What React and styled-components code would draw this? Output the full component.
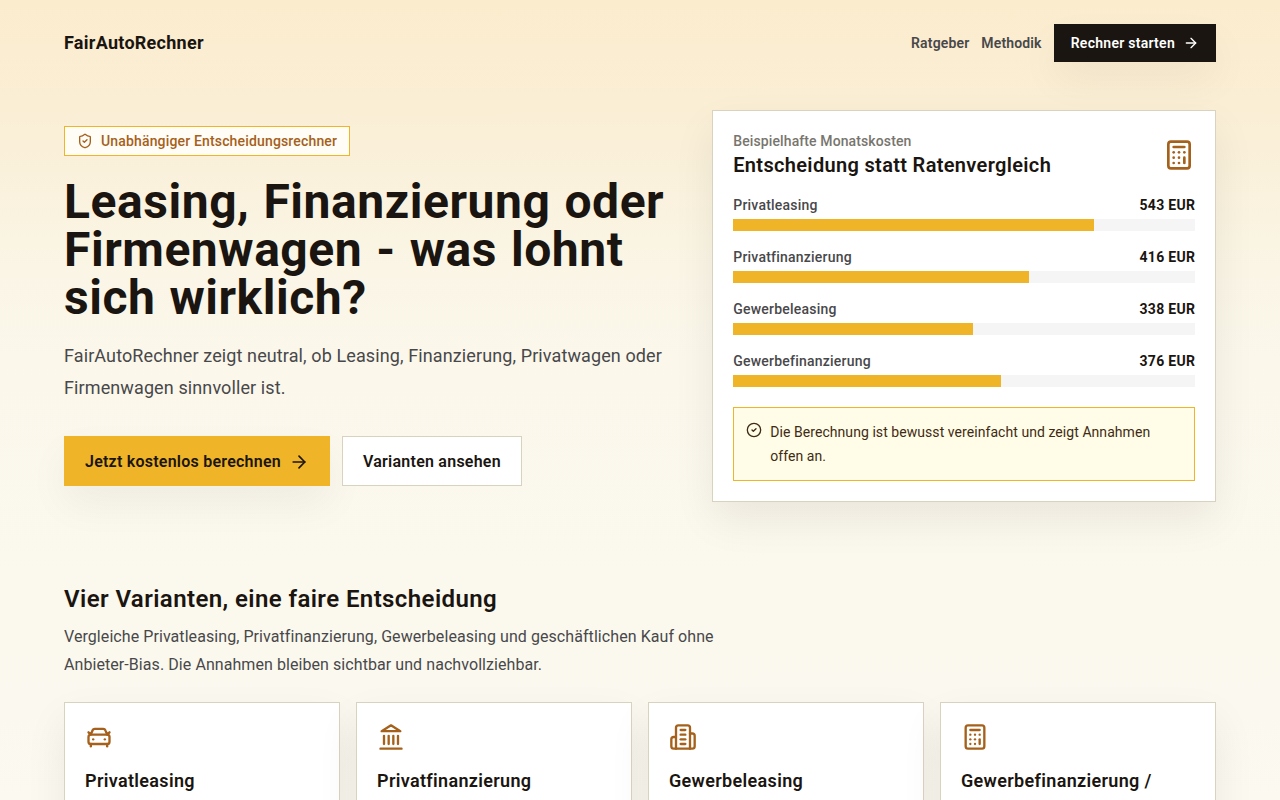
import React from "react";
import styled, { createGlobalStyle } from "styled-components";
import { ArrowRight, Calculator, CarFront, CircleCheck, ShieldCheck } from "lucide-react";

const ink = "#1a1510";
const amber = "#f0b429";
const brown = "#a5601b";
const line = "#d9d2bf";
const font = `Roboto, "Noto Sans", Arial, sans-serif`;

const GlobalStyle = createGlobalStyle`
  * { box-sizing: border-box; }
  html, body {
    margin: 0;
    height: 800px;
    overflow: hidden;
  }
  body {
    font-family: ${font};
    color: ${ink};
    background: #fbf9f0;
  }
`;

const Page = styled.div`
  min-height: 800px;
  padding: 0 64px;
  background: linear-gradient(
    180deg,
    #fcecce 0,
    #faeed4 100px,
    #faf5e5 265px,
    #fbf7eb 360px,
    #fbf9f0 800px
  );
`;

const Header = styled.header`
  height: 86px;
  display: flex;
  align-items: center;
  justify-content: space-between;
`;

const Logo = styled.div`
  padding-bottom: 2px;
  font-size: 18px;
  font-weight: 700;
  letter-spacing: 0.27px;
`;

const Nav = styled.nav`
  display: flex;
  align-items: center;
  gap: 12px;
`;

const NavLink = styled.a`
  font-size: 14px;
  font-weight: 600;
  letter-spacing: 0.15px;
  color: #48484a;
`;

const Button = styled.a`
  display: inline-flex;
  align-items: center;
  justify-content: center;
  gap: 8px;
  font-weight: 600;
  border: 1px solid transparent;
`;

const NavButton = styled(Button)`
  height: 38px;
  padding: 0 16px;
  font-size: 14px;
  letter-spacing: 0.27px;
  background: ${ink};
  color: #fff;
  box-shadow: 0 18px 40px rgba(26, 21, 16, 0.05);
`;

const Hero = styled.section`
  display: grid;
  grid-template-columns: 1fr 504px;
  gap: 48px;
  align-items: center;
  margin-top: 24px;
`;

const Intro = styled.div`
  display: flex;
  flex-direction: column;
  align-items: flex-start;
`;

const Badge = styled.div`
  height: 30px;
  display: inline-flex;
  align-items: center;
  gap: 8px;
  padding: 0 12px;
  font-size: 14px;
  font-weight: 500;
  letter-spacing: 0.16px;
  color: ${brown};
  background: #fffdf5;
  border: 1px solid ${amber};
`;

const Headline = styled.h1`
  margin: 22px 0 0;
  font-size: 48px;
  line-height: 48px;
  font-weight: 700;
  letter-spacing: 0.55px;
  word-spacing: 1.5px;
  white-space: nowrap;
`;

const Lead = styled.p`
  margin: 18px 0 0;
  font-size: 18px;
  line-height: 32px;
  letter-spacing: 0.11px;
  color: #48484a;
`;

const Actions = styled.div`
  display: flex;
  gap: 12px;
  margin-top: 32px;
`;

const PrimaryButton = styled(Button)`
  height: 50px;
  padding: 1px 20px 0;
  font-size: 16px;
  letter-spacing: 0.24px;
  background: ${amber};
  box-shadow: 0 18px 40px rgba(26, 21, 16, 0.05);
`;

const SecondaryButton = styled(Button)`
  height: 50px;
  padding: 1px 20px 0;
  font-size: 16px;
  letter-spacing: 0.24px;
  background: #fff;
  border-color: ${line};
`;

const Panel = styled.aside`
  padding: 20px;
  background: #fff;
  border: 1px solid ${line};
  box-shadow: 0 18px 40px rgba(26, 21, 16, 0.07);
`;

const PanelHead = styled.div`
  display: flex;
  align-items: center;
  justify-content: space-between;
  margin-bottom: 16px;
`;

const PanelEyebrow = styled.div`
  font-size: 14px;
  line-height: 20px;
  font-weight: 500;
  letter-spacing: 0.11px;
  color: #78756e;
`;

const PanelTitle = styled.div`
  font-size: 20px;
  line-height: 28px;
  font-weight: 600;
  letter-spacing: 0.33px;
`;

const CostList = styled.div`
  display: flex;
  flex-direction: column;
  gap: 16px;
`;

const CostLabels = styled.div`
  display: flex;
  justify-content: space-between;
  font-size: 14px;
  line-height: 20px;
  margin-bottom: 4px;
`;

const CostName = styled.span`
  font-weight: 500;
  letter-spacing: 0.22px;
  color: #48484a;
`;

const CostValue = styled.span`
  font-weight: 700;
  letter-spacing: 0.3px;
`;

const Track = styled.div`
  height: 12px;
  background: #f5f5f5;
`;

const Fill = styled.div`
  height: 100%;
  background: ${amber};
`;

const Note = styled.div`
  display: flex;
  gap: 8px;
  margin-top: 20px;
  padding: 12px;
  font-size: 14px;
  line-height: 24px;
  letter-spacing: 0.06px;
  color: #3f2a14;
  background: #fffde7;
  border: 1px solid ${amber};

  svg {
    flex: none;
    margin-top: 2px;
  }
`;

const Section = styled.section`
  margin-top: 81px;
`;

const SectionTitle = styled.h2`
  margin: 0;
  font-size: 24px;
  line-height: 32px;
  font-weight: 600;
  letter-spacing: 0.41px;
`;

const SectionText = styled.p`
  max-width: 672px;
  margin: 8px 0 0;
  font-size: 16px;
  line-height: 28px;
  letter-spacing: 0.07px;
  color: #48484a;
`;

const Cards = styled.div`
  display: grid;
  grid-template-columns: repeat(4, 1fr);
  gap: 16px;
  margin-top: 23px;
`;

const Card = styled.article`
  min-height: 140px;
  padding: 20px;
  background: #fff;
  border: 1px solid ${line};
  box-shadow: 0 18px 40px rgba(26, 21, 16, 0.07);

  svg {
    display: block;
    color: ${brown};
  }
`;

const CardTitle = styled.h3`
  margin: 16px 0 0;
  font-size: 18px;
  line-height: 28px;
  font-weight: 600;
  letter-spacing: 0.33px;
`;

// older lucide drawings, the package's current ones have different strokes
const Icon = styled.svg.attrs({
  viewBox: "0 0 24 24",
  width: 28,
  height: 28,
  fill: "none",
  stroke: "currentColor",
  strokeWidth: 2,
  strokeLinecap: "round",
  strokeLinejoin: "round",
})``;

const BankIcon = () => (
  <Icon>
    <path d="M3 22h18" />
    <path d="M6 18v-7" />
    <path d="M10 18v-7" />
    <path d="M14 18v-7" />
    <path d="M18 18v-7" />
    <path d="M12 2l8 5H4z" />
  </Icon>
);

const OfficeIcon = () => (
  <Icon>
    <path d="M6 22V4a2 2 0 0 1 2-2h8a2 2 0 0 1 2 2v18Z" />
    <path d="M6 12H4a2 2 0 0 0-2 2v6a2 2 0 0 0 2 2h2" />
    <path d="M18 9h2a2 2 0 0 1 2 2v9a2 2 0 0 1-2 2h-2" />
    <path d="M10 6h4" />
    <path d="M10 10h4" />
    <path d="M10 14h4" />
    <path d="M10 18h4" />
  </Icon>
);

const costs = [
  { name: "Privatleasing", value: 543, width: 78 },
  { name: "Privatfinanzierung", value: 416, width: 64 },
  { name: "Gewerbeleasing", value: 338, width: 52 },
  { name: "Gewerbefinanzierung", value: 376, width: 58 },
];

const variants = [
  { title: "Privatleasing", icon: <CarFront size={28} /> },
  { title: "Privatfinanzierung", icon: <BankIcon /> },
  { title: "Gewerbeleasing", icon: <OfficeIcon /> },
  { title: "Gewerbefinanzierung /", icon: <Calculator size={28} /> },
];

export default function App() {
  return (
    <Page>
      <GlobalStyle />
      <Header>
        <Logo>FairAutoRechner</Logo>
        <Nav>
          <NavLink>Ratgeber</NavLink>
          <NavLink>Methodik</NavLink>
          <NavButton>
            Rechner starten <ArrowRight size={16} />
          </NavButton>
        </Nav>
      </Header>

      <Hero>
        <Intro>
          <Badge>
            <ShieldCheck size={16} /> Unabhängiger Entscheidungsrechner
          </Badge>
          <Headline>
            Leasing, Finanzierung oder
            <br />
            Firmenwagen - was lohnt
            <br />
            sich wirklich?
          </Headline>
          <Lead>
            FairAutoRechner zeigt neutral, ob Leasing, Finanzierung, Privatwagen oder
            Firmenwagen sinnvoller ist.
          </Lead>
          <Actions>
            <PrimaryButton>
              Jetzt kostenlos berechnen <ArrowRight size={20} />
            </PrimaryButton>
            <SecondaryButton>Varianten ansehen</SecondaryButton>
          </Actions>
        </Intro>

        <Panel>
          <PanelHead>
            <div>
              <PanelEyebrow>Beispielhafte Monatskosten</PanelEyebrow>
              <PanelTitle>Entscheidung statt Ratenvergleich</PanelTitle>
            </div>
            <Calculator size={32} color={brown} />
          </PanelHead>
          <CostList>
            {costs.map((item) => (
              <div key={item.name}>
                <CostLabels>
                  <CostName>{item.name}</CostName>
                  <CostValue>{item.value} EUR</CostValue>
                </CostLabels>
                <Track>
                  <Fill style={{ width: `${item.width}%` }} />
                </Track>
              </div>
            ))}
          </CostList>
          <Note>
            <CircleCheck size={16} />
            <span>Die Berechnung ist bewusst vereinfacht und zeigt Annahmen offen an.</span>
          </Note>
        </Panel>
      </Hero>

      <Section>
        <SectionTitle>Vier Varianten, eine faire Entscheidung</SectionTitle>
        <SectionText>
          Vergleiche Privatleasing, Privatfinanzierung, Gewerbeleasing und geschäftlichen Kauf ohne
          Anbieter-Bias. Die Annahmen bleiben sichtbar und nachvollziehbar.
        </SectionText>
        <Cards>
          {variants.map(({ title, icon }) => (
            <Card key={title}>
              {icon}
              <CardTitle>{title}</CardTitle>
            </Card>
          ))}
        </Cards>
      </Section>
    </Page>
  );
}
